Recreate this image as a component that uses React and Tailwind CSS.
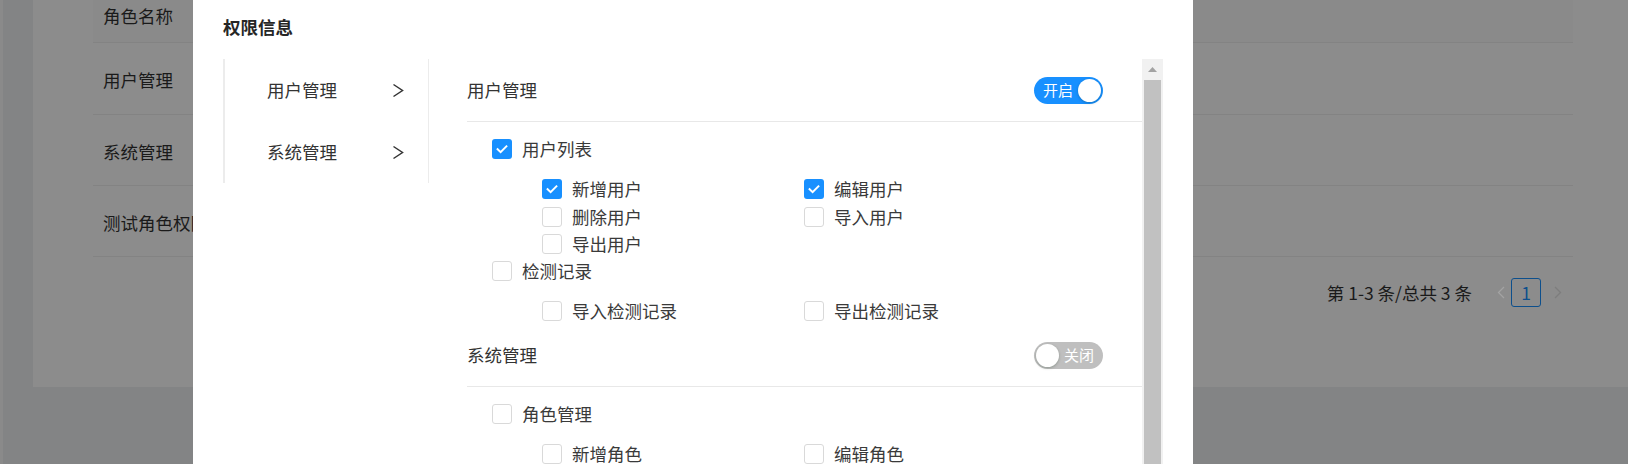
import React from "react";

function Check({ checked }) {
  if (checked) {
    return (
      <span className="flex h-[20px] w-[20px] shrink-0 items-center justify-center rounded-[3px] bg-[#1890ff]">
        <svg width="14" height="14" viewBox="0 0 14 14" fill="none">
          <path d="M2.6 7.2l3 2.9 5.8-5.8" stroke="#fff" strokeWidth="2" strokeLinecap="square" strokeLinejoin="miter" />
        </svg>
      </span>
    );
  }
  return <span className="block h-[20px] w-[20px] shrink-0 rounded-[3px] border border-[#d9d9d9] bg-white" />;
}

function Item({ checked, label }) {
  return (
    <div className="flex h-[20px] items-center gap-[10px]">
      <Check checked={checked} />
      <span className="text-[17.5px] leading-[20px] text-[#3a3a3a]">{label}</span>
    </div>
  );
}

function Group({ label, checked, children, first }) {
  return (
    <div className={first ? "" : "mt-[7px]"}>
      <div className="pl-[25px]">
        <Item checked={checked} label={label} />
      </div>
      <div className="mt-[20px] grid grid-cols-[262px_262px] gap-y-[7.5px] pl-[75px]">
        {children.map((c) => (
          <Item key={c.label} checked={c.checked} label={c.label} />
        ))}
      </div>
    </div>
  );
}

function Switch({ on }) {
  if (on) {
    return (
      <div className="flex h-[27px] w-[69px] items-center rounded-full bg-[#1890ff] pl-[9px] pr-[2px]">
        <span className="text-[15px] leading-[20px] text-white">开启</span>
        <span className="ml-auto h-[23px] w-[23px] rounded-full bg-white shadow-[0_1px_3px_rgba(0,35,11,0.25)]" />
      </div>
    );
  }
  return (
    <div className="flex h-[27px] w-[69px] items-center rounded-full bg-[#bfbfbf] pl-[2px] pr-[9px]">
      <span className="h-[23px] w-[23px] rounded-full bg-white shadow-[0_1px_3px_rgba(0,35,11,0.25)]" />
      <span className="ml-auto text-[15px] leading-[20px] text-white">关闭</span>
    </div>
  );
}

function Chevron() {
  return (
    <svg width="12" height="15" viewBox="0 0 12 15" fill="none">
      <path d="M1.5 1.5l9 6-9 6" stroke="#333" strokeWidth="1.5" strokeLinejoin="miter" />
    </svg>
  );
}

export default function App() {
  const rows = ["用户管理", "系统管理", "测试角色权限"];
  return (
    <div className="relative h-[464px] w-[1628px] overflow-hidden font-['Noto_Sans_CJK_SC','Noto_Sans',sans-serif]">
      {/* background page under overlay */}
      <div className="flex h-full w-full bg-[#838485]">
        <div className="w-[3px] bg-[#8a8a8a]" />
        <div className="flex-1 pl-[30px]">
          <div className="h-[387px] w-full bg-[#8c8c8c] pl-[60px] pt-0">
            <div className="w-[1480px]">
              <div className="flex h-[43px] items-start border-b border-[#838383] bg-[#8a8a8a] pl-[10px] pt-[3px]">
                <span className="text-[17.5px] leading-[26px] text-[#1a1a1a]">角色名称</span>
              </div>
              {rows.map((r, i) => (
                <div
                  key={r}
                  className={`flex items-center border-b border-[#838383] pl-[10px] pt-[3px] ${i === 0 ? "h-[72px]" : "h-[71px]"}`}
                >
                  <span className="text-[17.5px] leading-[26px] text-[#1a1a1a]">{r}</span>
                </div>
              ))}
              <div className="mt-[21px] flex h-[29px] items-center justify-end pr-[10px]">
                <span className="text-[17.5px] leading-[26px] text-[#1a1a1a]">第 1-3 条/总共 3 条</span>
                <span className="ml-[24px] flex w-[10px] justify-center">
                  <svg width="8" height="13" viewBox="0 0 8 13" fill="none">
                    <path d="M7 1L1.5 6.5 7 12" stroke="#a3a3a3" strokeWidth="1.3" />
                  </svg>
                </span>
                <span className="ml-[5px] flex h-[29px] w-[30px] items-center justify-center rounded-[3px] border border-[#0d4f8c] text-[17.5px] leading-[26px] text-[#0d4f8c]">
                  1
                </span>
                <span className="ml-[12px] flex w-[10px] justify-center">
                  <svg width="8" height="13" viewBox="0 0 8 13" fill="none">
                    <path d="M1 1l5.5 5.5L1 12" stroke="#7d7d7d" strokeWidth="1.3" />
                  </svg>
                </span>
              </div>
            </div>
          </div>
        </div>
      </div>

      {/* modal */}
      <div className="absolute left-[193px] top-0 flex h-[464px] w-[1000px] flex-col bg-white pl-[30px] pr-[30px]">
        <div className="flex h-[59px] items-start pt-[15px]">
          <span className="text-[17.5px] font-bold leading-[24px] text-[#262626]">权限信息</span>
        </div>
        <div className="flex flex-1">
          {/* left menu */}
          <div className="flex h-[124px] w-[206px] flex-col border-l-2 border-r border-[#ececec]">
            {["用户管理", "系统管理"].map((m) => (
              <div key={m} className="flex h-[62px] items-center pl-[42px] pr-[24px]">
                <span className="text-[17.5px] leading-[24px] text-[#333]">{m}</span>
                <span className="ml-auto flex">
                  <Chevron />
                </span>
              </div>
            ))}
          </div>
          {/* right content */}
          <div className="flex flex-1">
            <div className="flex-1 pl-[38px]">
              {/* section 1 */}
              <div className="flex h-[63px] items-center justify-between border-b border-[#e8e8e8] pr-[39px]">
                <span className="text-[17.5px] leading-[24px] text-[#333]">用户管理</span>
                <Switch on />
              </div>
              <div className="pb-[3px] pt-[17px]">
                <Group
                  first
                  label="用户列表"
                  checked
                  children={[
                    { label: "新增用户", checked: true },
                    { label: "编辑用户", checked: true },
                    { label: "删除用户", checked: false },
                    { label: "导入用户", checked: false },
                    { label: "导出用户", checked: false },
                  ]}
                />
                <Group
                  label="检测记录"
                  checked={false}
                  children={[
                    { label: "导入检测记录", checked: false },
                    { label: "导出检测记录", checked: false },
                  ]}
                />
              </div>
              {/* section 2 */}
              <div className="flex h-[63px] items-center justify-between border-b border-[#e8e8e8] pr-[39px]">
                <span className="text-[17.5px] leading-[24px] text-[#333]">系统管理</span>
                <Switch on={false} />
              </div>
              <div className="pt-[17px]">
                <Group
                  first
                  label="角色管理"
                  checked={false}
                  children={[
                    { label: "新增角色", checked: false },
                    { label: "编辑角色", checked: false },
                  ]}
                />
              </div>
            </div>
            {/* scrollbar */}
            <div className="flex w-[21px] flex-col bg-[#f1f1f1]">
              <div className="flex h-[21px] items-center justify-center">
                <svg width="9" height="5" viewBox="0 0 9 5">
                  <path d="M4.5 0L9 5H0z" fill="#a3a3a3" />
                </svg>
              </div>
              <div className="mx-[2px] flex-1 bg-[#c1c1c1]" />
            </div>
          </div>
        </div>
      </div>
    </div>
  );
}
